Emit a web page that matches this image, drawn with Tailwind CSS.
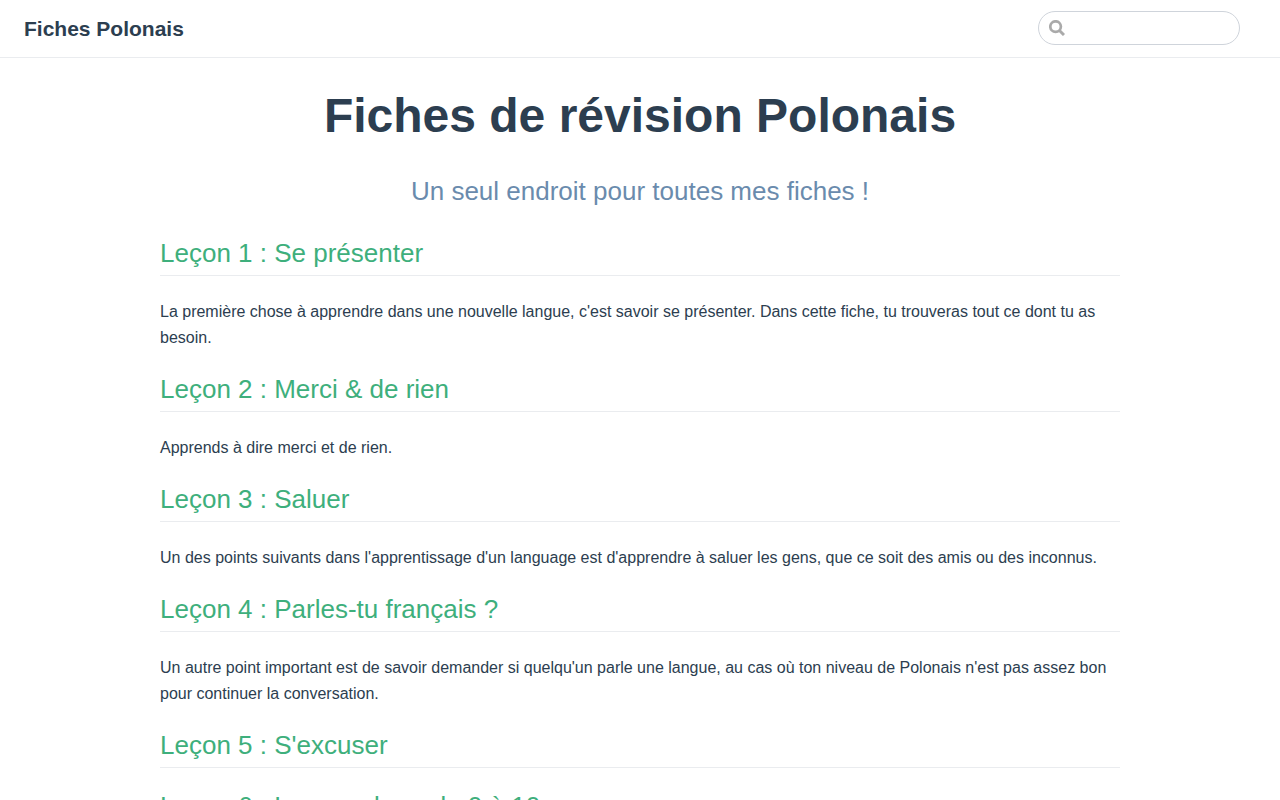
<!DOCTYPE html>
<html lang="fr">
<head>
<meta charset="utf-8">
<meta name="viewport" content="width=device-width, initial-scale=1">
<title>Fiches Polonais</title>
<script src="https://cdn.jsdelivr.net/npm/@tailwindcss/browser@4"></script>
</head>
<body class="bg-white font-['Liberation_Sans',Arial,sans-serif] text-base text-[#2c3e50] [text-rendering:optimizeSpeed]">
<header class="flex items-start justify-between border-b border-[#eaecef] py-[11px] pr-10 pl-6">
  <a href="#" class="text-[21px] leading-[35px] font-semibold">Fiches Polonais</a>
  <form role="search" class="grid items-center">
    <input type="search" aria-label="Rechercher" class="col-start-1 row-start-1 h-[34px] w-[202px] rounded-full border border-[#cfd4db] bg-white pr-2 pl-8 text-sm outline-none focus:border-[#3eaf7c]">
    <svg class="pointer-events-none col-start-1 row-start-1 ml-[11px] size-4" viewBox="0 0 16 16" fill="none" stroke="#aaa" aria-hidden="true">
      <circle cx="6.6" cy="6.6" r="5.3" stroke-width="2.7"/>
      <path d="M10.2 10.2 15 15" stroke-width="3"/>
    </svg>
  </form>
</header>
<main class="mx-auto max-w-[960px] pt-7 max-[960px]:px-6">
  <div class="text-center">
    <h1 class="text-5xl leading-[60px] font-semibold">Fiches de révision Polonais</h1>
    <p class="mt-7 text-[26px] leading-[34px] text-[#6a8bad]">Un seul endroit pour toutes mes fiches !</p>
  </div>
  <div class="mt-[29px] flex flex-col gap-[22px]">
    <section>
      <h2 class="border-b border-[#eaecef] pb-[6px] text-[26px] leading-[32px]"><a href="#" class="text-[#3eaf7c]">Leçon 1 : Se présenter</a></h2>
      <p class="mt-[23px] leading-[26px]">La première chose à apprendre dans une nouvelle langue, c'est savoir se présenter. Dans cette fiche, tu trouveras tout ce dont tu as besoin.</p>
    </section>
    <section>
      <h2 class="border-b border-[#eaecef] pb-[6px] text-[26px] leading-[32px]"><a href="#" class="text-[#3eaf7c]">Leçon 2 : Merci &amp; de rien</a></h2>
      <p class="mt-[23px] leading-[26px]">Apprends à dire merci et de rien.</p>
    </section>
    <section>
      <h2 class="border-b border-[#eaecef] pb-[6px] text-[26px] leading-[32px]"><a href="#" class="text-[#3eaf7c]">Leçon 3 : Saluer</a></h2>
      <p class="mt-[23px] leading-[26px]">Un des points suivants dans l'apprentissage d'un language est d'apprendre à saluer les gens, que ce soit des amis ou des inconnus.</p>
    </section>
    <section>
      <h2 class="border-b border-[#eaecef] pb-[6px] text-[26px] leading-[32px]"><a href="#" class="text-[#3eaf7c]">Leçon 4 : Parles-tu français ?</a></h2>
      <p class="mt-[23px] leading-[26px]">Un autre point important est de savoir demander si quelqu'un parle une langue, au cas où ton niveau de Polonais n'est pas assez bon pour continuer la conversation.</p>
    </section>
    <section>
      <h2 class="border-b border-[#eaecef] pb-[6px] text-[26px] leading-[32px]"><a href="#" class="text-[#3eaf7c]">Leçon 5 : S'excuser</a></h2>
    </section>
    <section>
      <h2 class="border-b border-[#eaecef] pb-[6px] text-[26px] leading-[32px]"><a href="#" class="text-[#3eaf7c]">Leçon 6 : Les nombres de 0 à 10</a></h2>
    </section>
  </div>
</main>
</body>
</html>
